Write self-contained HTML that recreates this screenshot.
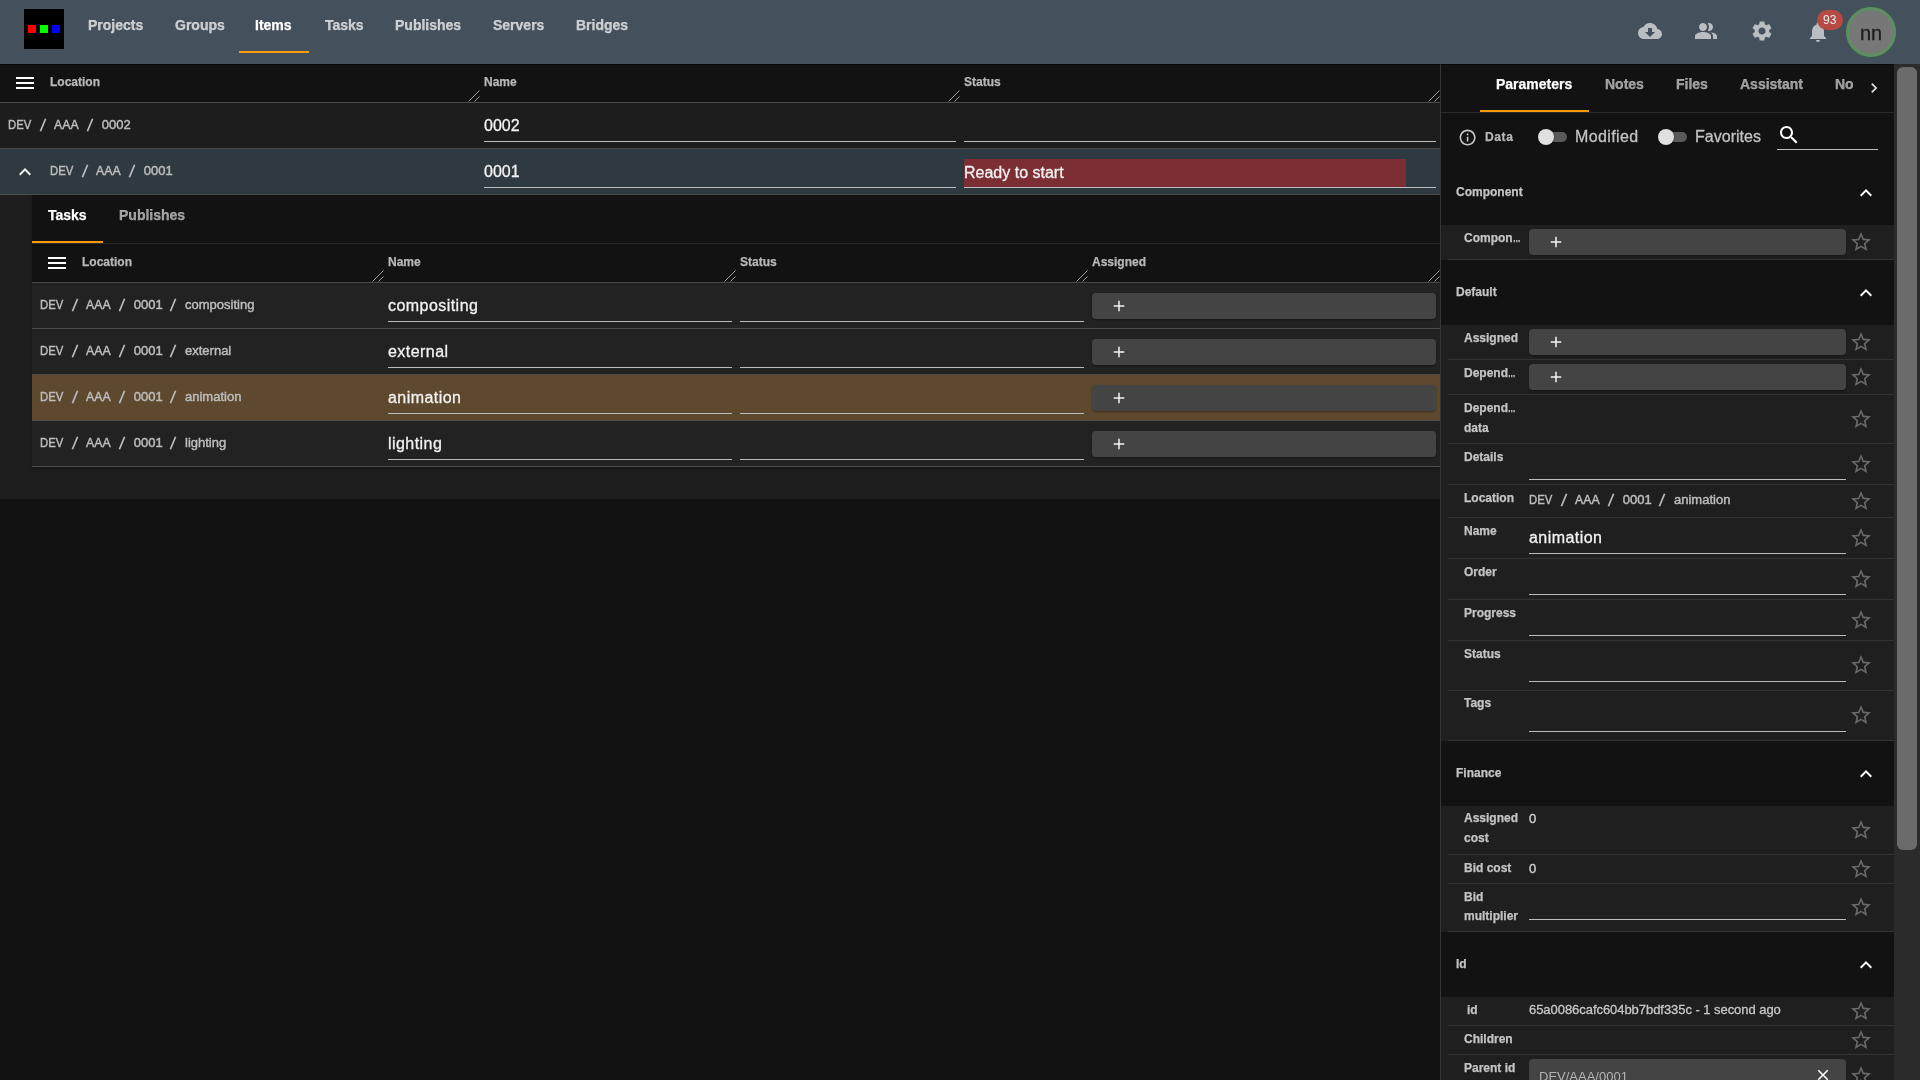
<!DOCTYPE html><html><head><meta charset="utf-8"><style>
html,body{margin:0;padding:0;}
body{width:1920px;height:1080px;overflow:hidden;background:#121212;position:relative;font-family:"Liberation Sans",sans-serif;}
.r{position:absolute;}
.t{position:absolute;white-space:nowrap;will-change:transform;}
.crumb .sep{display:inline-block;position:relative;height:0;}
body{-webkit-font-smoothing:antialiased;}
.ell{display:inline-block;transform:scaleX(.62);transform-origin:0 0;}
.b{-webkit-text-stroke:0.25px currentColor;}
.m{-webkit-text-stroke:0.3px currentColor;}
.crumb{-webkit-text-stroke:0.45px currentColor;}
</style></head><body>
<div class="r" style="left:0px;top:0px;width:1920px;height:64px;background:#44505c;"></div>
<div class="r" style="left:24px;top:9px;width:40px;height:40px;background:#000;"></div>
<div class="r" style="left:28px;top:25px;width:8px;height:8px;background:#ff0000;"></div>
<div class="r" style="left:40px;top:25px;width:8px;height:8px;background:#00ff00;"></div>
<div class="r" style="left:52px;top:25px;width:8px;height:8px;background:#0000ff;"></div>
<div class="t b" style="left:88px;top:18.15px;font-size:14px;line-height:14px;color:rgba(255,255,255,.7);font-weight:700;">Projects</div>
<div class="t b" style="left:175px;top:18.15px;font-size:14px;line-height:14px;color:rgba(255,255,255,.7);font-weight:700;">Groups</div>
<div class="t b" style="left:255px;top:18.15px;font-size:14px;line-height:14px;color:#ffffff;font-weight:700;">Items</div>
<div class="t b" style="left:325px;top:18.15px;font-size:14px;line-height:14px;color:rgba(255,255,255,.7);font-weight:700;">Tasks</div>
<div class="t b" style="left:395px;top:18.15px;font-size:14px;line-height:14px;color:rgba(255,255,255,.7);font-weight:700;">Publishes</div>
<div class="t b" style="left:493px;top:18.15px;font-size:14px;line-height:14px;color:rgba(255,255,255,.7);font-weight:700;">Servers</div>
<div class="t b" style="left:576px;top:18.15px;font-size:14px;line-height:14px;color:rgba(255,255,255,.7);font-weight:700;">Bridges</div>
<div class="r" style="left:239px;top:51px;width:70px;height:2px;background:#fb9a0a;"></div>
<svg class="r" style="left:1638px;top:19px;" width="24" height="24" viewBox="0 0 24 24"><path fill="#b9bec2" d="M19.35 10.04C18.67 6.59 15.64 4 12 4 9.11 4 6.6 5.64 5.35 8.04 2.34 8.36 0 10.91 0 14c0 3.31 2.69 6 6 6h13c2.76 0 5-2.24 5-5 0-2.64-2.05-4.78-4.65-4.96zM17 13l-5 5-5-5h3V9h4v4h3z"/></svg>
<svg class="r" style="left:1694px;top:19px;" width="24" height="24" viewBox="0 0 24 24"><path fill="#b9bec2" d="M16.67 13.13C18.04 14.06 19 15.32 19 17v3h4v-3c0-2.18-3.57-3.47-6.33-3.87zM15 12c2.21 0 4-1.79 4-4s-1.79-4-4-4c-.47 0-.91.1-1.33.24C14.5 5.27 15 6.58 15 8s-.5 2.73-1.33 3.76c.42.14.86.24 1.33.24zM9 12c2.21 0 4-1.79 4-4s-1.790-4-4-4-4 1.79-4 4 1.79 4 4 4zM9 13c-2.67 0-8 1.34-8 4v3h16v-3c0-2.66-5.33-4-8-4z"/></svg>
<svg class="r" style="left:1750px;top:19px;" width="24" height="24" viewBox="0 0 24 24"><path fill="#b9bec2" d="M19.14 12.94c.04-.3.06-.61.06-.94 0-.32-.02-.64-.07-.94l2.03-1.58c.18-.14.23-.41.12-.61l-1.92-3.32c-.12-.22-.37-.29-.59-.22l-2.39.96c-.5-.38-1.03-.7-1.62-.94l-.36-2.54c-.04-.24-.24-.41-.48-.41h-3.84c-.24 0-.43.17-.47.41l-.36 2.54c-.59.24-1.13.57-1.62.94l-2.39-.96c-.22-.08-.47 0-.59.22L2.74 8.87c-.12.21-.08.47.12.61l2.030 1.58c-.05.3-.09.63-.09.94s.02.64.07.94l-2.03 1.58c-.18.14-.23.41-.12.61l1.92 3.32c.12.22.37.29.59.22l2.39-.96c.5.38 1.03.7 1.62.94l.36 2.54c.05.24.24.41.48.41h3.84c.24 0 .44-.17.47-.41l.36-2.54c.59-.24 1.13-.56 1.62-.94l2.39.96c.22.08.47 0 .59-.22l1.92-3.32c.12-.22.07-.47-.12-.61l-2.01-1.58zM12 15.6c-1.98 0-3.6-1.62-3.6-3.6s1.62-3.6 3.6-3.6 3.6 1.62 3.6 3.6-1.62 3.6-3.6 3.6z"/></svg>
<svg class="r" style="left:1806px;top:20px;" width="24" height="24" viewBox="0 0 24 24"><path fill="#b9bec2" d="M12 22c1.1 0 2-.9 2-2h-4c0 1.1.89 2 2 2zm6-6v-5c0-3.07-1.64-5.64-4.5-6.32V4c0-.83-.67-1.5-1.5-1.5s-1.5.67-1.5 1.5v.68C7.63 5.36 6 7.92 6 11v5l-2 2v1h16v-1l-2-2z"/></svg>
<div class="r" style="left:1817px;top:10px;width:26px;height:20px;background:#b84a45;border-radius:10px;"></div>
<div class="t" style="left:1823px;top:14.34px;font-size:12px;line-height:12px;color:#ececec;font-weight:400;">93</div>
<div class="r" style="left:1846px;top:7px;width:50px;height:50px;background:#777777;border-radius:50%;box-sizing:border-box;border:3px solid #5b915e;"></div>
<div class="t m" style="left:1859.5px;top:22.77px;font-size:20px;line-height:20px;color:#1e1e1e;font-weight:400;">nn</div>
<div class="r" style="left:16px;top:77px;width:18px;height:2px;background:#fff;"></div>
<div class="r" style="left:16px;top:82px;width:18px;height:2px;background:#fff;"></div>
<div class="r" style="left:16px;top:87px;width:18px;height:2px;background:#fff;"></div>
<div class="t b" style="left:50px;top:75.84px;font-size:12px;line-height:12px;color:#b8b8b8;font-weight:700;">Location</div>
<div class="t b" style="left:484px;top:75.84px;font-size:12px;line-height:12px;color:#b8b8b8;font-weight:700;">Name</div>
<div class="t b" style="left:964px;top:75.84px;font-size:12px;line-height:12px;color:#b8b8b8;font-weight:700;">Status</div>
<svg class="r" style="left:468px;top:90px" width="12" height="12" viewBox="0 0 12 12"><path d="M0.5 11.5L11.5 0.5M6.5 11.5L11.5 6.5" stroke="#9a9a9a" stroke-width="1" fill="none"/></svg>
<svg class="r" style="left:948px;top:90px" width="12" height="12" viewBox="0 0 12 12"><path d="M0.5 11.5L11.5 0.5M6.5 11.5L11.5 6.5" stroke="#9a9a9a" stroke-width="1" fill="none"/></svg>
<svg class="r" style="left:1428px;top:90px" width="12" height="12" viewBox="0 0 12 12"><path d="M0.5 11.5L11.5 0.5M6.5 11.5L11.5 6.5" stroke="#9a9a9a" stroke-width="1" fill="none"/></svg>
<div class="r" style="left:0px;top:102px;width:1440px;height:1px;background:#4a4a4a;"></div>
<div class="r" style="left:0px;top:103px;width:1440px;height:45px;background:#1d1d1d;"></div>
<div class="r" style="left:0px;top:148px;width:1440px;height:1px;background:#4b4b4b;"></div>
<div class="t crumb" style="left:8px;top:118.00px;font-size:13px;line-height:13px;color:#bdbdbd;">
<span style="position:absolute;left:0px;top:0;transform:scaleX(0.868);transform-origin:0 0;">DEV</span>
<span style="position:absolute;left:46.3px;top:0;transform:scaleX(0.946);transform-origin:0 0;">AAA</span>
<span style="position:absolute;left:93.7px;top:0;">0002</span>
<svg width="8" height="14" viewBox="0 0 8 14" style="position:absolute;left:30.60px;top:0.30px"><path d="M1.4 13.3L6.6 0.7" stroke="#bdbdbd" stroke-width="1.7" fill="none"/></svg>
<svg width="8" height="14" viewBox="0 0 8 14" style="position:absolute;left:78.20px;top:0.30px"><path d="M1.4 13.3L6.6 0.7" stroke="#bdbdbd" stroke-width="1.7" fill="none"/></svg>
</div>
<div class="t m" style="left:484px;top:118.46px;font-size:16px;line-height:16px;color:#f2f2f2;font-weight:400;">0002</div>
<div class="r" style="left:484px;top:141px;width:472px;height:1px;background:#bdbdbd;"></div>
<div class="r" style="left:964px;top:141px;width:472px;height:1px;background:#bdbdbd;"></div>
<div class="r" style="left:0px;top:149px;width:1440px;height:45px;background:#2e3940;"></div>
<div class="r" style="left:0px;top:194px;width:1440px;height:1px;background:#4b4b4b;"></div>
<svg class="r" style="left:13px;top:160px;" width="24" height="24" viewBox="0 0 24 24"><path fill="#f0f0f0" d="M12 8l-6 6 1.41 1.41L12 10.83l4.59 4.58L18 14z"/></svg>
<div class="t crumb" style="left:50px;top:164.00px;font-size:13px;line-height:13px;color:#bdbdbd;">
<span style="position:absolute;left:0px;top:0;transform:scaleX(0.868);transform-origin:0 0;">DEV</span>
<span style="position:absolute;left:46.3px;top:0;transform:scaleX(0.946);transform-origin:0 0;">AAA</span>
<span style="position:absolute;left:93.7px;top:0;">0001</span>
<svg width="8" height="14" viewBox="0 0 8 14" style="position:absolute;left:30.60px;top:0.30px"><path d="M1.4 13.3L6.6 0.7" stroke="#bdbdbd" stroke-width="1.7" fill="none"/></svg>
<svg width="8" height="14" viewBox="0 0 8 14" style="position:absolute;left:78.20px;top:0.30px"><path d="M1.4 13.3L6.6 0.7" stroke="#bdbdbd" stroke-width="1.7" fill="none"/></svg>
</div>
<div class="t m" style="left:484px;top:163.96px;font-size:16px;line-height:16px;color:#f2f2f2;font-weight:400;">0001</div>
<div class="r" style="left:484px;top:187px;width:472px;height:1px;background:#bdbdbd;"></div>
<div class="r" style="left:964px;top:159px;width:442px;height:28px;background:#7b2f34;"></div>
<div class="t m" style="left:964px;top:164.96px;font-size:16px;line-height:16px;color:#f2f2f2;font-weight:400;">Ready to start</div>
<div class="r" style="left:964px;top:187px;width:472px;height:1px;background:#bdbdbd;"></div>
<div class="r" style="left:0px;top:195px;width:1440px;height:304px;background:#1e1e1e;"></div>
<div class="r" style="left:32px;top:195px;width:1408px;height:272px;background:#121212;box-shadow:0 2px 4px rgba(0,0,0,.25);"></div>
<div class="t b" style="left:48px;top:208.15px;font-size:14px;line-height:14px;color:#ffffff;font-weight:700;">Tasks</div>
<div class="t b" style="left:119px;top:208.15px;font-size:14px;line-height:14px;color:rgba(255,255,255,.58);font-weight:700;">Publishes</div>
<div class="r" style="left:32px;top:241px;width:71px;height:2px;background:#fb9a0a;"></div>
<div class="r" style="left:32px;top:243px;width:1408px;height:1px;background:#2a2a2a;"></div>
<div class="r" style="left:48px;top:257px;width:18px;height:2px;background:#fff;"></div>
<div class="r" style="left:48px;top:262px;width:18px;height:2px;background:#fff;"></div>
<div class="r" style="left:48px;top:267px;width:18px;height:2px;background:#fff;"></div>
<div class="t b" style="left:82px;top:256.34px;font-size:12px;line-height:12px;color:#b8b8b8;font-weight:700;">Location</div>
<div class="t b" style="left:388px;top:256.34px;font-size:12px;line-height:12px;color:#b8b8b8;font-weight:700;">Name</div>
<div class="t b" style="left:740px;top:256.34px;font-size:12px;line-height:12px;color:#b8b8b8;font-weight:700;">Status</div>
<div class="t b" style="left:1092px;top:256.34px;font-size:12px;line-height:12px;color:#b8b8b8;font-weight:700;">Assigned</div>
<svg class="r" style="left:372px;top:270px" width="12" height="12" viewBox="0 0 12 12"><path d="M0.5 11.5L11.5 0.5M6.5 11.5L11.5 6.5" stroke="#9a9a9a" stroke-width="1" fill="none"/></svg>
<svg class="r" style="left:724px;top:270px" width="12" height="12" viewBox="0 0 12 12"><path d="M0.5 11.5L11.5 0.5M6.5 11.5L11.5 6.5" stroke="#9a9a9a" stroke-width="1" fill="none"/></svg>
<svg class="r" style="left:1076px;top:270px" width="12" height="12" viewBox="0 0 12 12"><path d="M0.5 11.5L11.5 0.5M6.5 11.5L11.5 6.5" stroke="#9a9a9a" stroke-width="1" fill="none"/></svg>
<svg class="r" style="left:1428px;top:270px" width="12" height="12" viewBox="0 0 12 12"><path d="M0.5 11.5L11.5 0.5M6.5 11.5L11.5 6.5" stroke="#9a9a9a" stroke-width="1" fill="none"/></svg>
<div class="r" style="left:32px;top:282px;width:1408px;height:1px;background:#4a4a4a;"></div>
<div class="r" style="left:32px;top:283px;width:1408px;height:45px;background:#222222;"></div>
<div class="r" style="left:32px;top:328px;width:1408px;height:1px;background:#4b4b4b;"></div>
<div class="t crumb" style="left:40px;top:298.00px;font-size:13px;line-height:13px;color:#bdbdbd;">
<span style="position:absolute;left:0px;top:0;transform:scaleX(0.868);transform-origin:0 0;">DEV</span>
<span style="position:absolute;left:46.3px;top:0;transform:scaleX(0.946);transform-origin:0 0;">AAA</span>
<span style="position:absolute;left:93.7px;top:0;">0001</span>
<span style="position:absolute;left:145px;top:0;">compositing</span>
<svg width="8" height="14" viewBox="0 0 8 14" style="position:absolute;left:30.60px;top:0.30px"><path d="M1.4 13.3L6.6 0.7" stroke="#bdbdbd" stroke-width="1.7" fill="none"/></svg>
<svg width="8" height="14" viewBox="0 0 8 14" style="position:absolute;left:78.20px;top:0.30px"><path d="M1.4 13.3L6.6 0.7" stroke="#bdbdbd" stroke-width="1.7" fill="none"/></svg>
<svg width="8" height="14" viewBox="0 0 8 14" style="position:absolute;left:129.40px;top:0.30px"><path d="M1.4 13.3L6.6 0.7" stroke="#bdbdbd" stroke-width="1.7" fill="none"/></svg>
</div>
<div class="t m" style="left:388px;top:297.96px;font-size:16px;line-height:16px;color:#f2f2f2;font-weight:400;letter-spacing:0.45px;">compositing</div>
<div class="r" style="left:388px;top:321px;width:344px;height:1px;background:#bdbdbd;"></div>
<div class="r" style="left:740px;top:321px;width:344px;height:1px;background:#bdbdbd;"></div>
<div class="r" style="left:1092px;top:293px;width:344px;height:26px;background:#444444;border-radius:4px;box-shadow:0 1px 2px rgba(0,0,0,.35);"></div>
<svg class="r" style="left:1109.5px;top:296.5px;" width="18" height="18" viewBox="0 0 24 24"><path fill="#f4f4f4" d="M19 13h-6v6h-2v-6H5v-2h6V5h2v6h6v2z"/></svg>
<div class="r" style="left:32px;top:329px;width:1408px;height:45px;background:#222222;"></div>
<div class="r" style="left:32px;top:374px;width:1408px;height:1px;background:#4b4b4b;"></div>
<div class="t crumb" style="left:40px;top:344.00px;font-size:13px;line-height:13px;color:#bdbdbd;">
<span style="position:absolute;left:0px;top:0;transform:scaleX(0.868);transform-origin:0 0;">DEV</span>
<span style="position:absolute;left:46.3px;top:0;transform:scaleX(0.946);transform-origin:0 0;">AAA</span>
<span style="position:absolute;left:93.7px;top:0;">0001</span>
<span style="position:absolute;left:145px;top:0;">external</span>
<svg width="8" height="14" viewBox="0 0 8 14" style="position:absolute;left:30.60px;top:0.30px"><path d="M1.4 13.3L6.6 0.7" stroke="#bdbdbd" stroke-width="1.7" fill="none"/></svg>
<svg width="8" height="14" viewBox="0 0 8 14" style="position:absolute;left:78.20px;top:0.30px"><path d="M1.4 13.3L6.6 0.7" stroke="#bdbdbd" stroke-width="1.7" fill="none"/></svg>
<svg width="8" height="14" viewBox="0 0 8 14" style="position:absolute;left:129.40px;top:0.30px"><path d="M1.4 13.3L6.6 0.7" stroke="#bdbdbd" stroke-width="1.7" fill="none"/></svg>
</div>
<div class="t m" style="left:388px;top:343.96px;font-size:16px;line-height:16px;color:#f2f2f2;font-weight:400;letter-spacing:0.45px;">external</div>
<div class="r" style="left:388px;top:367px;width:344px;height:1px;background:#bdbdbd;"></div>
<div class="r" style="left:740px;top:367px;width:344px;height:1px;background:#bdbdbd;"></div>
<div class="r" style="left:1092px;top:339px;width:344px;height:26px;background:#444444;border-radius:4px;box-shadow:0 1px 2px rgba(0,0,0,.35);"></div>
<svg class="r" style="left:1109.5px;top:342.5px;" width="18" height="18" viewBox="0 0 24 24"><path fill="#f4f4f4" d="M19 13h-6v6h-2v-6H5v-2h6V5h2v6h6v2z"/></svg>
<div class="r" style="left:32px;top:375px;width:1408px;height:45px;background:#5e482e;"></div>
<div class="r" style="left:32px;top:420px;width:1408px;height:1px;background:#4b4b4b;"></div>
<div class="t crumb" style="left:40px;top:390.00px;font-size:13px;line-height:13px;color:#bdbdbd;">
<span style="position:absolute;left:0px;top:0;transform:scaleX(0.868);transform-origin:0 0;">DEV</span>
<span style="position:absolute;left:46.3px;top:0;transform:scaleX(0.946);transform-origin:0 0;">AAA</span>
<span style="position:absolute;left:93.7px;top:0;">0001</span>
<span style="position:absolute;left:145px;top:0;">animation</span>
<svg width="8" height="14" viewBox="0 0 8 14" style="position:absolute;left:30.60px;top:0.30px"><path d="M1.4 13.3L6.6 0.7" stroke="#bdbdbd" stroke-width="1.7" fill="none"/></svg>
<svg width="8" height="14" viewBox="0 0 8 14" style="position:absolute;left:78.20px;top:0.30px"><path d="M1.4 13.3L6.6 0.7" stroke="#bdbdbd" stroke-width="1.7" fill="none"/></svg>
<svg width="8" height="14" viewBox="0 0 8 14" style="position:absolute;left:129.40px;top:0.30px"><path d="M1.4 13.3L6.6 0.7" stroke="#bdbdbd" stroke-width="1.7" fill="none"/></svg>
</div>
<div class="t m" style="left:388px;top:389.96px;font-size:16px;line-height:16px;color:#f2f2f2;font-weight:400;letter-spacing:0.45px;">animation</div>
<div class="r" style="left:388px;top:413px;width:344px;height:1px;background:#bdbdbd;"></div>
<div class="r" style="left:740px;top:413px;width:344px;height:1px;background:#bdbdbd;"></div>
<div class="r" style="left:1092px;top:385px;width:344px;height:26px;background:#444444;border-radius:4px;box-shadow:0 1px 2px rgba(0,0,0,.35);"></div>
<svg class="r" style="left:1109.5px;top:388.5px;" width="18" height="18" viewBox="0 0 24 24"><path fill="#f4f4f4" d="M19 13h-6v6h-2v-6H5v-2h6V5h2v6h6v2z"/></svg>
<div class="r" style="left:32px;top:421px;width:1408px;height:45px;background:#222222;"></div>
<div class="r" style="left:32px;top:466px;width:1408px;height:1px;background:#4b4b4b;"></div>
<div class="t crumb" style="left:40px;top:436.00px;font-size:13px;line-height:13px;color:#bdbdbd;">
<span style="position:absolute;left:0px;top:0;transform:scaleX(0.868);transform-origin:0 0;">DEV</span>
<span style="position:absolute;left:46.3px;top:0;transform:scaleX(0.946);transform-origin:0 0;">AAA</span>
<span style="position:absolute;left:93.7px;top:0;">0001</span>
<span style="position:absolute;left:145px;top:0;">lighting</span>
<svg width="8" height="14" viewBox="0 0 8 14" style="position:absolute;left:30.60px;top:0.30px"><path d="M1.4 13.3L6.6 0.7" stroke="#bdbdbd" stroke-width="1.7" fill="none"/></svg>
<svg width="8" height="14" viewBox="0 0 8 14" style="position:absolute;left:78.20px;top:0.30px"><path d="M1.4 13.3L6.6 0.7" stroke="#bdbdbd" stroke-width="1.7" fill="none"/></svg>
<svg width="8" height="14" viewBox="0 0 8 14" style="position:absolute;left:129.40px;top:0.30px"><path d="M1.4 13.3L6.6 0.7" stroke="#bdbdbd" stroke-width="1.7" fill="none"/></svg>
</div>
<div class="t m" style="left:388px;top:435.96px;font-size:16px;line-height:16px;color:#f2f2f2;font-weight:400;letter-spacing:0.45px;">lighting</div>
<div class="r" style="left:388px;top:459px;width:344px;height:1px;background:#bdbdbd;"></div>
<div class="r" style="left:740px;top:459px;width:344px;height:1px;background:#bdbdbd;"></div>
<div class="r" style="left:1092px;top:431px;width:344px;height:26px;background:#444444;border-radius:4px;box-shadow:0 1px 2px rgba(0,0,0,.35);"></div>
<svg class="r" style="left:1109.5px;top:434.5px;" width="18" height="18" viewBox="0 0 24 24"><path fill="#f4f4f4" d="M19 13h-6v6h-2v-6H5v-2h6V5h2v6h6v2z"/></svg>
<div class="r" style="left:1440px;top:64px;width:1px;height:1016px;background:#363636;"></div>
<div class="r" style="left:1441px;top:64px;width:453px;height:1016px;background:#121212;"></div>
<div class="r" style="left:1894px;top:64px;width:26px;height:1016px;background:#2b2b2b;"></div>
<div class="r" style="left:1897px;top:67px;width:20px;height:783px;background:#6b6b6b;border-radius:6px;"></div>
<div class="t b" style="left:1496px;top:76.65px;font-size:14px;line-height:14px;color:#ffffff;font-weight:700;">Parameters</div>
<div class="t b" style="left:1605px;top:76.65px;font-size:14px;line-height:14px;color:rgba(255,255,255,.58);font-weight:700;">Notes</div>
<div class="t b" style="left:1676px;top:76.65px;font-size:14px;line-height:14px;color:rgba(255,255,255,.58);font-weight:700;">Files</div>
<div class="t b" style="left:1740px;top:76.65px;font-size:14px;line-height:14px;color:rgba(255,255,255,.58);font-weight:700;">Assistant</div>
<div class="r" style="left:1835px;top:64px;width:19px;height:48px;overflow:hidden;">
<div class="t b" style="left:0px;top:12.65px;font-size:14px;line-height:14px;color:rgba(255,255,255,.58);font-weight:700;">No</div>
</div>
<svg class="r" style="left:1863.8px;top:78px;" width="20" height="20" viewBox="0 0 24 24"><path fill="#e0e0e0" d="M10 6L8.59 7.41 13.17 12l-4.58 4.59L10 18l6-6z"/></svg>
<div class="r" style="left:1480px;top:110px;width:109px;height:2px;background:#fb9a0a;"></div>
<div class="r" style="left:1441px;top:112px;width:453px;height:1px;background:#2a2a2a;"></div>
<svg class="r" style="left:1458.4px;top:127.6px;" width="19.2" height="19.2" viewBox="0 0 24 24"><path fill="#c8c8c8" d="M11 7h2v2h-2zm0 4h2v6h-2zm1-9C6.48 2 2 6.48 2 12s4.48 10 10 10 10-4.48 10-10S17.520 2 12 2zm0 18c-4.41 0-8-3.59-8-8s3.59-8 8-8 8 3.59 8 8-3.59 8-8 8z"/></svg>
<div class="t b" style="left:1485px;top:130.84px;font-size:12px;line-height:12px;color:#b8b8b8;font-weight:700;letter-spacing:0.6px;">Data</div>
<div class="r" style="left:1539px;top:132px;width:28px;height:10px;background:#5a5a5a;border-radius:5px;"></div>
<div class="r" style="left:1538px;top:129px;width:16px;height:16px;background:#e0e0e0;border-radius:50%;box-shadow:0 1px 2px rgba(0,0,0,.4);"></div>
<div class="t m" style="left:1574.5px;top:129.26px;font-size:16px;line-height:16px;color:#c2c2c2;font-weight:400;letter-spacing:0.38px;">Modified</div>
<div class="r" style="left:1659px;top:132px;width:28px;height:10px;background:#5a5a5a;border-radius:5px;"></div>
<div class="r" style="left:1658px;top:129px;width:16px;height:16px;background:#e0e0e0;border-radius:50%;box-shadow:0 1px 2px rgba(0,0,0,.4);"></div>
<div class="t m" style="left:1694.5px;top:129.26px;font-size:16px;line-height:16px;color:#c2c2c2;font-weight:400;letter-spacing:0.02px;">Favorites</div>
<svg class="r" style="left:1777px;top:123px;" width="24" height="24" viewBox="0 0 24 24"><path fill="#ffffff" d="M15.5 14h-.79l-.28-.27C15.41 12.59 16 11.11 16 9.5 16 5.91 13.09 3 9.5 3S3 5.91 3 9.5 5.91 16 9.5 16c1.61 0 3.09-.59 4.23-1.57l.27.28v.79l5 4.99L20.49 19l-4.99-5zm-6 0C7.01 14 5 11.99 5 9.5S7.01 5 9.5 5 14 7.01 14 9.5 11.99 14 9.5 14z"/></svg>
<div class="r" style="left:1777px;top:149px;width:101px;height:1px;background:#bdbdbd;"></div>
<div class="t b" style="left:1456px;top:185.84px;font-size:12px;line-height:12px;color:#c4c4c4;font-weight:700;">Component</div>
<svg class="r" style="left:1854px;top:181px;" width="24" height="24" viewBox="0 0 24 24"><path fill="#ffffff" d="M12 8l-6 6 1.41 1.41L12 10.83l4.59 4.58L18 14z"/></svg>
<div class="r" style="left:1441px;top:225px;width:453px;height:35px;background:#1f1f1f;"></div>
<div class="r" style="left:1448px;top:259px;width:446px;height:1px;background:#333333;"></div>
<div class="t b" style="left:1464px;top:231.84px;font-size:12px;line-height:12px;color:#c4c4c4;font-weight:700;">Compon<span class="ell">…</span></div>
<div class="r" style="left:1529px;top:229px;width:317px;height:26px;background:#444444;border-radius:4px;box-shadow:0 1px 2px rgba(0,0,0,.35);"></div>
<svg class="r" style="left:1547.0px;top:233.0px;" width="18" height="18" viewBox="0 0 24 24"><path fill="#f4f4f4" d="M19 13h-6v6h-2v-6H5v-2h6V5h2v6h6v2z"/></svg>
<svg class="r" style="left:1849px;top:230px;" width="24" height="24" viewBox="0 0 24 24"><path fill="#6a6a6a" d="M22 9.24l-7.19-.62L12 2 9.19 8.63 2 9.24l5.46 4.73L5.82 21 12 17.27 18.18 21l-1.63-7.03L22 9.24zM12 15.4l-3.76 2.27 1-4.28-3.32-2.88 4.38-.38L12 6.1l1.71 4.04 4.38.38-3.32 2.88 1 4.28L12 15.4z"/></svg>
<div class="t b" style="left:1456px;top:285.84px;font-size:12px;line-height:12px;color:#c4c4c4;font-weight:700;">Default</div>
<svg class="r" style="left:1854px;top:281px;" width="24" height="24" viewBox="0 0 24 24"><path fill="#ffffff" d="M12 8l-6 6 1.41 1.41L12 10.83l4.59 4.58L18 14z"/></svg>
<div class="r" style="left:1441px;top:325px;width:453px;height:35px;background:#1f1f1f;"></div>
<div class="r" style="left:1448px;top:359px;width:446px;height:1px;background:#333333;"></div>
<div class="t b" style="left:1464px;top:331.84px;font-size:12px;line-height:12px;color:#c4c4c4;font-weight:700;">Assigned</div>
<div class="r" style="left:1529px;top:329px;width:317px;height:26px;background:#444444;border-radius:4px;box-shadow:0 1px 2px rgba(0,0,0,.35);"></div>
<svg class="r" style="left:1547.0px;top:333.0px;" width="18" height="18" viewBox="0 0 24 24"><path fill="#f4f4f4" d="M19 13h-6v6h-2v-6H5v-2h6V5h2v6h6v2z"/></svg>
<svg class="r" style="left:1849px;top:330px;" width="24" height="24" viewBox="0 0 24 24"><path fill="#6a6a6a" d="M22 9.24l-7.19-.62L12 2 9.19 8.63 2 9.24l5.46 4.73L5.82 21 12 17.27 18.18 21l-1.63-7.03L22 9.24zM12 15.4l-3.76 2.27 1-4.28-3.32-2.88 4.38-.38L12 6.1l1.71 4.04 4.38.38-3.32 2.88 1 4.28L12 15.4z"/></svg>
<div class="r" style="left:1441px;top:360px;width:453px;height:35px;background:#1f1f1f;"></div>
<div class="r" style="left:1448px;top:394px;width:446px;height:1px;background:#333333;"></div>
<div class="t b" style="left:1464px;top:366.84px;font-size:12px;line-height:12px;color:#c4c4c4;font-weight:700;">Depend<span class="ell">…</span></div>
<div class="r" style="left:1529px;top:364px;width:317px;height:26px;background:#444444;border-radius:4px;box-shadow:0 1px 2px rgba(0,0,0,.35);"></div>
<svg class="r" style="left:1547.0px;top:368.0px;" width="18" height="18" viewBox="0 0 24 24"><path fill="#f4f4f4" d="M19 13h-6v6h-2v-6H5v-2h6V5h2v6h6v2z"/></svg>
<svg class="r" style="left:1849px;top:365px;" width="24" height="24" viewBox="0 0 24 24"><path fill="#6a6a6a" d="M22 9.24l-7.19-.62L12 2 9.19 8.63 2 9.24l5.46 4.73L5.82 21 12 17.27 18.18 21l-1.63-7.03L22 9.24zM12 15.4l-3.76 2.27 1-4.28-3.32-2.88 4.38-.38L12 6.1l1.71 4.04 4.38.38-3.32 2.88 1 4.28L12 15.4z"/></svg>
<div class="r" style="left:1441px;top:395px;width:453px;height:49px;background:#1f1f1f;"></div>
<div class="r" style="left:1448px;top:443px;width:446px;height:1px;background:#333333;"></div>
<div class="t b" style="left:1464px;top:402.34px;font-size:12px;line-height:12px;color:#c4c4c4;font-weight:700;">Depend<span class="ell">…</span></div>
<div class="t b" style="left:1464px;top:421.84px;font-size:12px;line-height:12px;color:#c4c4c4;font-weight:700;">data</div>
<svg class="r" style="left:1849px;top:407px;" width="24" height="24" viewBox="0 0 24 24"><path fill="#6a6a6a" d="M22 9.24l-7.19-.62L12 2 9.19 8.63 2 9.24l5.46 4.73L5.82 21 12 17.27 18.18 21l-1.63-7.03L22 9.24zM12 15.4l-3.76 2.27 1-4.28-3.32-2.88 4.38-.38L12 6.1l1.71 4.04 4.38.38-3.32 2.88 1 4.28L12 15.4z"/></svg>
<div class="r" style="left:1441px;top:444px;width:453px;height:41px;background:#1f1f1f;"></div>
<div class="r" style="left:1448px;top:484px;width:446px;height:1px;background:#333333;"></div>
<div class="t b" style="left:1464px;top:450.84px;font-size:12px;line-height:12px;color:#c4c4c4;font-weight:700;">Details</div>
<div class="r" style="left:1529px;top:479px;width:317px;height:1px;background:#bdbdbd;"></div>
<svg class="r" style="left:1849px;top:452px;" width="24" height="24" viewBox="0 0 24 24"><path fill="#6a6a6a" d="M22 9.24l-7.19-.62L12 2 9.19 8.63 2 9.24l5.46 4.73L5.82 21 12 17.27 18.18 21l-1.63-7.03L22 9.24zM12 15.4l-3.76 2.27 1-4.28-3.32-2.88 4.38-.38L12 6.1l1.71 4.04 4.38.38-3.32 2.88 1 4.28L12 15.4z"/></svg>
<div class="r" style="left:1441px;top:485px;width:453px;height:33px;background:#1f1f1f;"></div>
<div class="r" style="left:1448px;top:517px;width:446px;height:1px;background:#333333;"></div>
<div class="t b" style="left:1464px;top:491.84px;font-size:12px;line-height:12px;color:#c4c4c4;font-weight:700;">Location</div>
<div class="t crumb" style="left:1529px;top:493.00px;font-size:13px;line-height:13px;color:#bdbdbd;">
<span style="position:absolute;left:0px;top:0;transform:scaleX(0.868);transform-origin:0 0;">DEV</span>
<span style="position:absolute;left:46.3px;top:0;transform:scaleX(0.946);transform-origin:0 0;">AAA</span>
<span style="position:absolute;left:93.7px;top:0;">0001</span>
<span style="position:absolute;left:145px;top:0;">animation</span>
<svg width="8" height="14" viewBox="0 0 8 14" style="position:absolute;left:30.60px;top:0.30px"><path d="M1.4 13.3L6.6 0.7" stroke="#bdbdbd" stroke-width="1.7" fill="none"/></svg>
<svg width="8" height="14" viewBox="0 0 8 14" style="position:absolute;left:78.20px;top:0.30px"><path d="M1.4 13.3L6.6 0.7" stroke="#bdbdbd" stroke-width="1.7" fill="none"/></svg>
<svg width="8" height="14" viewBox="0 0 8 14" style="position:absolute;left:129.40px;top:0.30px"><path d="M1.4 13.3L6.6 0.7" stroke="#bdbdbd" stroke-width="1.7" fill="none"/></svg>
</div>
<svg class="r" style="left:1849px;top:489px;" width="24" height="24" viewBox="0 0 24 24"><path fill="#6a6a6a" d="M22 9.24l-7.19-.62L12 2 9.19 8.63 2 9.24l5.46 4.73L5.82 21 12 17.27 18.18 21l-1.63-7.03L22 9.24zM12 15.4l-3.76 2.27 1-4.28-3.32-2.88 4.38-.38L12 6.1l1.71 4.04 4.38.38-3.32 2.88 1 4.28L12 15.4z"/></svg>
<div class="r" style="left:1441px;top:518px;width:453px;height:41px;background:#1f1f1f;"></div>
<div class="r" style="left:1448px;top:558px;width:446px;height:1px;background:#333333;"></div>
<div class="t b" style="left:1464px;top:524.84px;font-size:12px;line-height:12px;color:#c4c4c4;font-weight:700;">Name</div>
<div class="t m" style="left:1529px;top:529.96px;font-size:16px;line-height:16px;color:#f2f2f2;font-weight:400;letter-spacing:0.45px;">animation</div>
<div class="r" style="left:1529px;top:553px;width:317px;height:1px;background:#bdbdbd;"></div>
<svg class="r" style="left:1849px;top:526px;" width="24" height="24" viewBox="0 0 24 24"><path fill="#6a6a6a" d="M22 9.24l-7.19-.62L12 2 9.19 8.63 2 9.24l5.46 4.73L5.82 21 12 17.27 18.18 21l-1.63-7.03L22 9.24zM12 15.4l-3.76 2.27 1-4.28-3.32-2.88 4.38-.38L12 6.1l1.71 4.04 4.38.38-3.32 2.88 1 4.28L12 15.4z"/></svg>
<div class="r" style="left:1441px;top:559px;width:453px;height:41px;background:#1f1f1f;"></div>
<div class="r" style="left:1448px;top:599px;width:446px;height:1px;background:#333333;"></div>
<div class="t b" style="left:1464px;top:565.84px;font-size:12px;line-height:12px;color:#c4c4c4;font-weight:700;">Order</div>
<div class="r" style="left:1529px;top:594px;width:317px;height:1px;background:#bdbdbd;"></div>
<svg class="r" style="left:1849px;top:567px;" width="24" height="24" viewBox="0 0 24 24"><path fill="#6a6a6a" d="M22 9.24l-7.19-.62L12 2 9.19 8.63 2 9.24l5.46 4.73L5.82 21 12 17.27 18.18 21l-1.63-7.03L22 9.24zM12 15.4l-3.76 2.27 1-4.28-3.32-2.88 4.38-.38L12 6.1l1.71 4.04 4.38.38-3.32 2.88 1 4.28L12 15.4z"/></svg>
<div class="r" style="left:1441px;top:600px;width:453px;height:41px;background:#1f1f1f;"></div>
<div class="r" style="left:1448px;top:640px;width:446px;height:1px;background:#333333;"></div>
<div class="t b" style="left:1464px;top:606.84px;font-size:12px;line-height:12px;color:#c4c4c4;font-weight:700;">Progress</div>
<div class="r" style="left:1529px;top:635px;width:317px;height:1px;background:#bdbdbd;"></div>
<svg class="r" style="left:1849px;top:608px;" width="24" height="24" viewBox="0 0 24 24"><path fill="#6a6a6a" d="M22 9.24l-7.19-.62L12 2 9.19 8.63 2 9.24l5.46 4.73L5.82 21 12 17.27 18.18 21l-1.63-7.03L22 9.24zM12 15.4l-3.76 2.27 1-4.28-3.32-2.88 4.38-.38L12 6.1l1.71 4.04 4.38.38-3.32 2.88 1 4.28L12 15.4z"/></svg>
<div class="r" style="left:1441px;top:641px;width:453px;height:50px;background:#1f1f1f;"></div>
<div class="r" style="left:1448px;top:690px;width:446px;height:1px;background:#333333;"></div>
<div class="t b" style="left:1464px;top:647.84px;font-size:12px;line-height:12px;color:#c4c4c4;font-weight:700;">Status</div>
<div class="r" style="left:1529px;top:681px;width:317px;height:1px;background:#bdbdbd;"></div>
<svg class="r" style="left:1849px;top:653px;" width="24" height="24" viewBox="0 0 24 24"><path fill="#6a6a6a" d="M22 9.24l-7.19-.62L12 2 9.19 8.63 2 9.24l5.46 4.73L5.82 21 12 17.27 18.18 21l-1.63-7.03L22 9.24zM12 15.4l-3.76 2.27 1-4.28-3.32-2.88 4.38-.38L12 6.1l1.71 4.04 4.38.38-3.32 2.88 1 4.28L12 15.4z"/></svg>
<div class="r" style="left:1441px;top:691px;width:453px;height:50px;background:#1f1f1f;"></div>
<div class="r" style="left:1448px;top:740px;width:446px;height:1px;background:#333333;"></div>
<div class="t b" style="left:1464px;top:696.84px;font-size:12px;line-height:12px;color:#c4c4c4;font-weight:700;">Tags</div>
<div class="r" style="left:1529px;top:731px;width:317px;height:1px;background:#bdbdbd;"></div>
<svg class="r" style="left:1849px;top:703px;" width="24" height="24" viewBox="0 0 24 24"><path fill="#6a6a6a" d="M22 9.24l-7.19-.62L12 2 9.19 8.63 2 9.24l5.46 4.73L5.82 21 12 17.27 18.18 21l-1.63-7.03L22 9.24zM12 15.4l-3.76 2.27 1-4.28-3.32-2.88 4.38-.38L12 6.1l1.71 4.04 4.38.38-3.32 2.88 1 4.28L12 15.4z"/></svg>
<div class="t b" style="left:1456px;top:766.84px;font-size:12px;line-height:12px;color:#c4c4c4;font-weight:700;">Finance</div>
<svg class="r" style="left:1854px;top:762px;" width="24" height="24" viewBox="0 0 24 24"><path fill="#ffffff" d="M12 8l-6 6 1.41 1.41L12 10.83l4.59 4.58L18 14z"/></svg>
<div class="r" style="left:1441px;top:806px;width:453px;height:49px;background:#1f1f1f;"></div>
<div class="r" style="left:1448px;top:854px;width:446px;height:1px;background:#333333;"></div>
<div class="t b" style="left:1464px;top:812.34px;font-size:12px;line-height:12px;color:#c4c4c4;font-weight:700;">Assigned</div>
<div class="t b" style="left:1464px;top:831.84px;font-size:12px;line-height:12px;color:#c4c4c4;font-weight:700;">cost</div>
<div class="t" style="left:1529px;top:811.50px;font-size:13px;line-height:13px;color:#d4d4d4;font-weight:400;-webkit-text-stroke:0.35px currentColor;">0</div>
<svg class="r" style="left:1849px;top:818px;" width="24" height="24" viewBox="0 0 24 24"><path fill="#6a6a6a" d="M22 9.24l-7.19-.62L12 2 9.19 8.63 2 9.24l5.46 4.73L5.82 21 12 17.27 18.18 21l-1.63-7.03L22 9.24zM12 15.4l-3.76 2.27 1-4.28-3.32-2.88 4.38-.38L12 6.1l1.71 4.04 4.38.38-3.32 2.88 1 4.28L12 15.4z"/></svg>
<div class="r" style="left:1441px;top:855px;width:453px;height:29px;background:#1f1f1f;"></div>
<div class="r" style="left:1448px;top:883px;width:446px;height:1px;background:#333333;"></div>
<div class="t b" style="left:1464px;top:862.34px;font-size:12px;line-height:12px;color:#c4c4c4;font-weight:700;">Bid cost</div>
<div class="t" style="left:1529px;top:861.50px;font-size:13px;line-height:13px;color:#d4d4d4;font-weight:400;-webkit-text-stroke:0.35px currentColor;">0</div>
<svg class="r" style="left:1849px;top:857px;" width="24" height="24" viewBox="0 0 24 24"><path fill="#6a6a6a" d="M22 9.24l-7.19-.62L12 2 9.19 8.63 2 9.24l5.46 4.73L5.82 21 12 17.27 18.18 21l-1.63-7.03L22 9.24zM12 15.4l-3.76 2.27 1-4.28-3.32-2.88 4.38-.38L12 6.1l1.71 4.04 4.38.38-3.32 2.88 1 4.28L12 15.4z"/></svg>
<div class="r" style="left:1441px;top:884px;width:453px;height:48px;background:#1f1f1f;"></div>
<div class="r" style="left:1448px;top:931px;width:446px;height:1px;background:#333333;"></div>
<div class="t b" style="left:1464px;top:890.84px;font-size:12px;line-height:12px;color:#c4c4c4;font-weight:700;">Bid</div>
<div class="t b" style="left:1464px;top:909.84px;font-size:12px;line-height:12px;color:#c4c4c4;font-weight:700;">multiplier</div>
<div class="r" style="left:1529px;top:919px;width:317px;height:1px;background:#bdbdbd;"></div>
<svg class="r" style="left:1849px;top:895px;" width="24" height="24" viewBox="0 0 24 24"><path fill="#6a6a6a" d="M22 9.24l-7.19-.62L12 2 9.19 8.63 2 9.24l5.46 4.73L5.82 21 12 17.27 18.18 21l-1.63-7.03L22 9.24zM12 15.4l-3.76 2.27 1-4.28-3.32-2.88 4.38-.38L12 6.1l1.71 4.04 4.38.38-3.32 2.88 1 4.28L12 15.4z"/></svg>
<div class="t b" style="left:1456px;top:957.84px;font-size:12px;line-height:12px;color:#c4c4c4;font-weight:700;">Id</div>
<svg class="r" style="left:1854px;top:953px;" width="24" height="24" viewBox="0 0 24 24"><path fill="#ffffff" d="M12 8l-6 6 1.41 1.41L12 10.83l4.59 4.58L18 14z"/></svg>
<div class="r" style="left:1441px;top:997px;width:453px;height:29px;background:#1f1f1f;"></div>
<div class="r" style="left:1448px;top:1025px;width:446px;height:1px;background:#333333;"></div>
<div class="t b" style="left:1467px;top:1004.34px;font-size:12px;line-height:12px;color:#c4c4c4;font-weight:700;">id</div>
<div class="t" style="left:1529px;top:1002.50px;font-size:13px;line-height:13px;color:#c8c8c8;font-weight:400;letter-spacing:-0.05px;-webkit-text-stroke:0.3px currentColor;">65a0086cafc604bb7bdf335c - 1 second ago</div>
<svg class="r" style="left:1849px;top:999px;" width="24" height="24" viewBox="0 0 24 24"><path fill="#6a6a6a" d="M22 9.24l-7.19-.62L12 2 9.19 8.63 2 9.24l5.46 4.73L5.82 21 12 17.27 18.18 21l-1.63-7.03L22 9.24zM12 15.4l-3.76 2.27 1-4.28-3.32-2.88 4.38-.38L12 6.1l1.71 4.04 4.38.38-3.32 2.88 1 4.28L12 15.4z"/></svg>
<div class="r" style="left:1441px;top:1026px;width:453px;height:29px;background:#1f1f1f;"></div>
<div class="r" style="left:1448px;top:1054px;width:446px;height:1px;background:#333333;"></div>
<div class="t b" style="left:1464px;top:1033.34px;font-size:12px;line-height:12px;color:#c4c4c4;font-weight:700;">Children</div>
<svg class="r" style="left:1849px;top:1028px;" width="24" height="24" viewBox="0 0 24 24"><path fill="#6a6a6a" d="M22 9.24l-7.19-.62L12 2 9.19 8.63 2 9.24l5.46 4.73L5.82 21 12 17.27 18.18 21l-1.63-7.03L22 9.24zM12 15.4l-3.76 2.27 1-4.28-3.32-2.88 4.38-.38L12 6.1l1.71 4.04 4.38.38-3.32 2.88 1 4.28L12 15.4z"/></svg>
<div class="r" style="left:1441px;top:1055px;width:453px;height:25px;background:#1f1f1f;"></div>
<div class="t b" style="left:1464px;top:1061.84px;font-size:12px;line-height:12px;color:#c4c4c4;font-weight:700;">Parent id</div>
<div class="r" style="left:1529px;top:1059px;width:317px;height:40px;background:#444444;border-radius:4px;"></div>
<div class="t" style="left:1538.5px;top:1070.00px;font-size:13px;line-height:13px;color:#b4b4b4;font-weight:400;">DEV/AAA/0001</div>
<svg class="r" style="left:1814px;top:1066px;" width="18" height="18" viewBox="0 0 24 24"><path fill="#ffffff" d="M19 6.41L17.59 5 12 10.59 6.41 5 5 6.41 10.59 12 5 17.59 6.41 19 12 13.41 17.59 19 19 17.59 13.41 12z"/></svg>
<svg class="r" style="left:1849px;top:1064px;" width="24" height="24" viewBox="0 0 24 24"><path fill="#6a6a6a" d="M22 9.24l-7.19-.62L12 2 9.19 8.63 2 9.24l5.46 4.73L5.82 21 12 17.27 18.18 21l-1.63-7.03L22 9.24zM12 15.4l-3.76 2.27 1-4.28-3.32-2.88 4.38-.38L12 6.1l1.71 4.04 4.38.38-3.32 2.88 1 4.28L12 15.4z"/></svg>
<div class="r" style="left:0px;top:64px;width:1894px;height:1px;background:rgba(0,0,0,.4);"></div>
</body></html>
